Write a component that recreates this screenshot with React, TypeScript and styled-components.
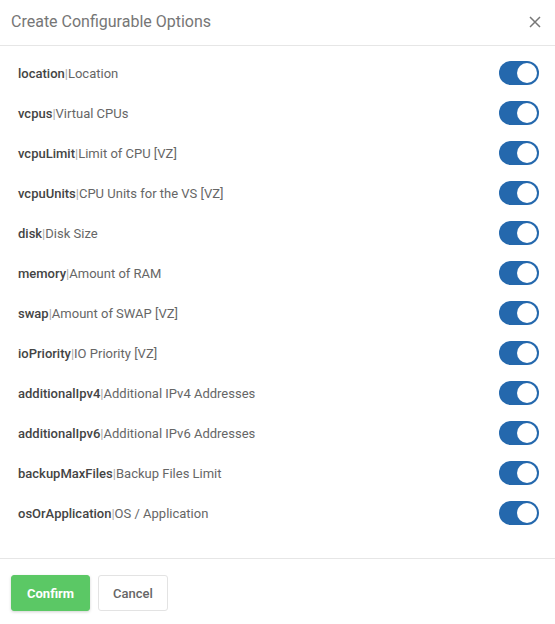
import styled, { createGlobalStyle } from "styled-components";

const GlobalStyle = createGlobalStyle`
  * { box-sizing: border-box; }
  body {
    margin: 0;
    background: #ffffff;
    font-family: Roboto, "Liberation Sans", Arial, sans-serif;
  }
`;

const Modal = styled.div`
  width: 555px;
  height: 624px;
  display: flex;
  flex-direction: column;
  background: #fff;
`;

const Header = styled.div`
  flex-shrink: 0;
  height: 46px;
  display: flex;
  align-items: center;
  justify-content: space-between;
  padding: 0 12px 2px 11px;
  border-bottom: 1px solid #e6e6e6;
`;

const Title = styled.h4`
  margin: 0;
  font-size: 16px;
  font-weight: 400;
  color: #767676;
`;

const CloseBtn = styled.button`
  border: 0;
  background: none;
  padding: 0;
  width: 16px;
  height: 16px;
  display: flex;
  align-items: center;
  justify-content: center;
  cursor: pointer;
`;

const Body = styled.ul`
  flex-shrink: 0;
  list-style: none;
  margin: 0;
  padding: 7px 16px 25px 18px;
`;

const Row = styled.li`
  height: 40px;
  display: flex;
  align-items: center;
  justify-content: space-between;
`;

const Label = styled.span`
  font-size: 13px;
  color: #666;
`;

const Key = styled.b`
  font-weight: 500;
  color: #444;
`;

const Pipe = styled.span`
  color: #a8a8a8;
`;

const Switch = styled.span<{ $on: boolean }>`
  width: 40px;
  height: 24px;
  border-radius: 12px;
  background: ${(p) => (p.$on ? "#2468ad" : "#ccc")};
  display: flex;
  align-items: center;
  justify-content: ${(p) => (p.$on ? "flex-end" : "flex-start")};
  padding: 2px;
`;

const Knob = styled.span`
  width: 20px;
  height: 20px;
  border-radius: 50%;
  background: #fff;
`;

const Footer = styled.div`
  flex: 1;
  border-top: 1px solid #e6e6e6;
  display: flex;
  align-items: flex-start;
  gap: 8px;
  padding: 16px 11px 0;
`;

const Button = styled.button<{ $primary?: boolean }>`
  height: 36px;
  padding: 0 ${(p) => (p.$primary ? "15px" : "14px")};
  font-family: inherit;
  font-size: 13px;
  font-weight: ${(p) => (p.$primary ? 700 : 500)};
  border-radius: 3px;
  cursor: pointer;
  color: ${(p) => (p.$primary ? "#fff" : "#666")};
  background: ${(p) => (p.$primary ? "#5bc865" : "#fff")};
  border: 1px solid ${(p) => (p.$primary ? "#5bc865" : "#e3e3e3")};
  box-shadow: ${(p) => (p.$primary ? "0 1px 3px rgba(0,0,0,0.18)" : "none")};
`;

const options = [
  ["location", "Location"],
  ["vcpus", "Virtual CPUs"],
  ["vcpuLimit", "Limit of CPU [VZ]"],
  ["vcpuUnits", "CPU Units for the VS [VZ]"],
  ["disk", "Disk Size"],
  ["memory", "Amount of RAM"],
  ["swap", "Amount of SWAP [VZ]"],
  ["ioPriority", "IO Priority [VZ]"],
  ["additionalIpv4", "Additional IPv4 Addresses"],
  ["additionalIpv6", "Additional IPv6 Addresses"],
  ["backupMaxFiles", "Backup Files Limit"],
  ["osOrApplication", "OS / Application"],
];

export default function App() {
  return (
    <>
      <GlobalStyle />
      <Modal>
        <Header>
          <Title>Create Configurable Options</Title>
          <CloseBtn aria-label="Close">
            <svg width="12" height="12" viewBox="0 0 12 12">
              <path d="M1 1L11 11M11 1L1 11" stroke="#777" strokeWidth="1.5" />
            </svg>
          </CloseBtn>
        </Header>
        <Body>
          {options.map(([key, name]) => (
            <Row key={key}>
              <Label>
                <Key>{key}</Key>
                <Pipe>|</Pipe>
                {name}
              </Label>
              <Switch $on={true}>
                <Knob />
              </Switch>
            </Row>
          ))}
        </Body>
        <Footer>
          <Button $primary>Confirm</Button>
          <Button>Cancel</Button>
        </Footer>
      </Modal>
    </>
  );
}
